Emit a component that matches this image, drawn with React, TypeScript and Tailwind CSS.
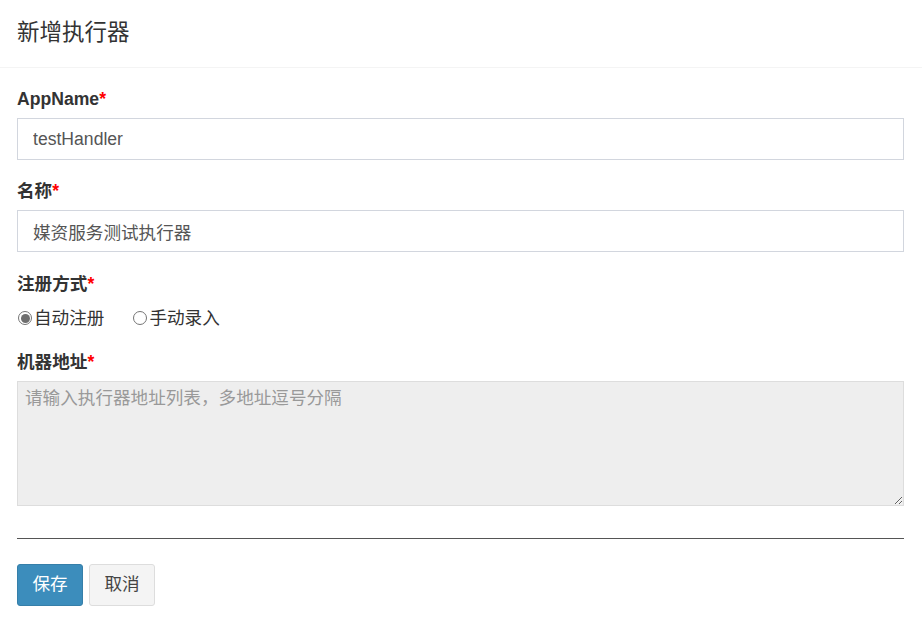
import { useState } from "react";

const font = { fontFamily: '"Liberation Sans", "Noto Sans CJK SC", sans-serif' };

const Label = ({ text }: { text: string }) => (
  <div className="h-[22px] leading-[22px] text-[17.6px] font-bold text-[#333] mb-2">
    {text}
    <span className="text-[#ff0000]">*</span>
  </div>
);

const Radio = ({ checked, label, onClick }: { checked: boolean; label: string; onClick: () => void }) => (
  <label className="flex items-center cursor-pointer" onClick={onClick}>
    <span className="shrink-0 w-[14px] h-[14px] rounded-full border border-[#757575] bg-white flex items-center justify-center mr-[2px]">
      {checked && <span className="w-[9px] h-[9px] rounded-full bg-[#6e6e6e]" />}
    </span>
    <span>{label}</span>
  </label>
);

export default function App() {
  const [mode, setMode] = useState(0);

  return (
    <div className="w-[922px] h-[643px] bg-white text-[17.6px] text-[#333]" style={font}>
      <div className="h-[68px] border-b border-[#f4f4f4] px-[17px] flex items-center">
        <h4 className="text-[22.5px] text-[#333] leading-none pb-px">新增执行器</h4>
      </div>

      <div className="px-[17px] pt-[20px]">
        <Label text="AppName" />
        <input
          className="w-[887px] h-[42px] border border-[#d2d6de] px-[15px] text-[17.6px] text-[#555] outline-none"
          defaultValue="testHandler"
        />

        <div className="mt-[20px]">
          <Label text="名称" />
          <input
            className="w-[887px] h-[42px] border border-[#d2d6de] px-[15px] text-[17.6px] text-[#555] outline-none"
            defaultValue="媒资服务测试执行器"
          />
        </div>

        <div className="mt-[21px]">
          <Label text="注册方式" />
          <div className="flex items-center gap-[29px] h-[22px] leading-[22px] text-[#333] mt-[12px] pl-px">
            <Radio checked={mode === 0} label="自动注册" onClick={() => setMode(0)} />
            <Radio checked={mode === 1} label="手动录入" onClick={() => setMode(1)} />
          </div>
        </div>

        <div className="mt-[22px]">
          <Label text="机器地址" />
          <textarea
            className="block w-[887px] h-[125px] bg-[#eee] border border-[#ddd] px-[7px] pt-[3px] pb-[5px] text-[17.6px] text-[#555] placeholder-[#999] outline-none"
            placeholder="请输入执行器地址列表，多地址逗号分隔"
            disabled
          />
        </div>

        <hr className="w-[887px] mt-[32px] border-t border-[#555]" />

        <div className="flex gap-[6px] mt-[25px]">
          <button className="w-[66px] h-[42px] rounded-[3px] bg-[#3c8dbc] border border-[#367fa9] text-white text-[17.6px] pb-[2px]">
            保存
          </button>
          <button className="w-[66px] h-[42px] rounded-[3px] bg-[#f4f4f4] border border-[#ddd] text-[#444] text-[17.6px] pb-[2px]">
            取消
          </button>
        </div>
      </div>
    </div>
  );
}
